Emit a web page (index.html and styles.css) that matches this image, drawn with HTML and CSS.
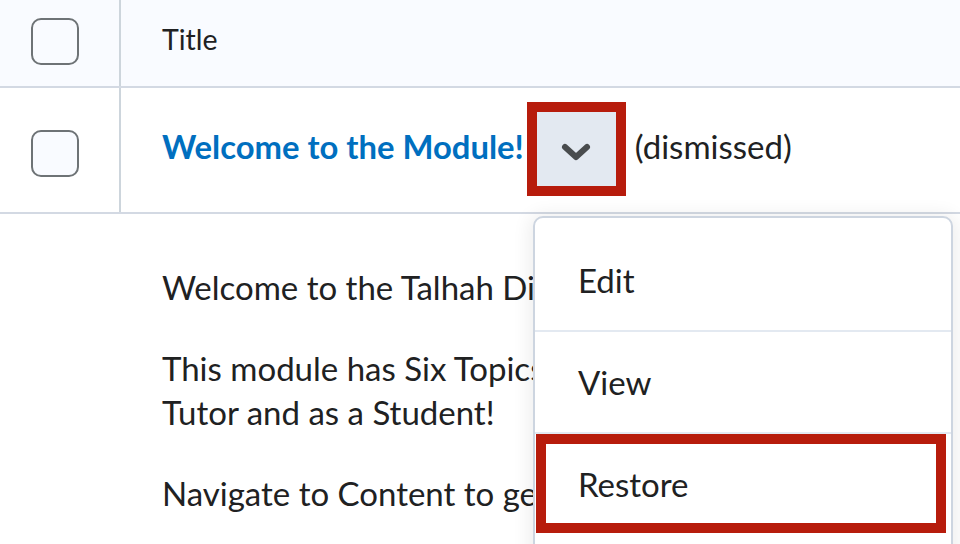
FILE: index.html
```html
<!DOCTYPE html>
<html lang="en">
<head>
<meta charset="utf-8">
<title>Module</title>
<link rel="stylesheet" href="styles.css">
</head>
<body>
<div class="page">
  <div class="table">
    <div class="row head">
      <div class="cell check"><span class="box"></span></div>
      <div class="cell main"><span class="title">Title</span></div>
    </div>
    <div class="row item">
      <div class="cell check"><span class="box"></span></div>
      <div class="cell main">
        <a class="link" href="#">Welcome to the Module!</a>
        <button class="ddbtn" type="button" aria-label="Actions">
          <svg width="40" height="30" viewBox="0 0 40 30"><polyline points="9,10 20,20 31,10" fill="none" stroke="#494c4e" stroke-width="6" stroke-linecap="round" stroke-linejoin="round"/></svg>
        </button>
        <span class="status">(dismissed)</span>
      </div>
    </div>
  </div>
  <div class="desc">
    <p>Welcome to the Talhah Digital Module!</p>
    <p>This module has Six Topics to try out as a<br>Tutor and as a Student!</p>
    <p>Navigate to Content to get started.</p>
  </div>
  <div class="menu">
    <div class="mi">Edit</div>
    <div class="mi">View</div>
    <div class="mi sel">Restore</div>
  </div>
</div>
</body>
</html>
```
FILE: styles.css
```css
html, body {
  margin: 0;
  padding: 0;
  overflow: hidden;
  background: #ffffff;
}
body {
  font-family: Lato, "Noto Sans", sans-serif;
  color: #202122;
  width: 960px;
  height: 544px;
}
.page {
  position: relative;
  width: 960px;
  height: 544px;
  overflow: hidden;
}
.row {
  display: flex;
  border-bottom: 2px solid #d3d9e3;
}
.head {
  height: 86px;
  background: #f9fbff;
}
.item {
  height: 124px;
  background: #ffffff;
}
.cell.check {
  box-sizing: border-box;
  width: 121px;
  border-right: 2px solid #cdd5dc;
  padding-left: 31px;
  display: flex;
  align-items: center;
}
.box {
  display: block;
  width: 48px;
  height: 47px;
  box-sizing: border-box;
  border: 2px solid #6e7376;
  border-radius: 10px;
  background: #f9fbff;
}
.head .box { margin-top: -4px; }
.item .box { margin-top: 7px; }
.cell.main {
  flex: 1;
  display: flex;
  align-items: center;
  padding-left: 41px;
}
.title {
  font-size: 28.5px;
  margin-top: -8px;
}
.link {
  font-size: 32.8px;
  font-weight: 700;
  color: #006fbf;
  text-decoration: none;
  margin-top: -8px;
}
.ddbtn {
  margin: -2px 0 0 3px;
  width: 99px;
  height: 94px;
  box-sizing: border-box;
  border: 10px solid #b71c0c;
  background: #e3e9f1;
  padding: 0;
  display: flex;
  align-items: center;
  justify-content: center;
  flex: none;
}
.ddbtn svg { display: block; margin-top: 6px; }
.status {
  font-size: 33px;
  margin-left: 9px;
  margin-top: -8px;
}
.desc {
  padding: 51px 0 0 162px;
  font-size: 33px;
  line-height: 44px;
  white-space: nowrap;
}
.desc p {
  margin: 0 0 37px 0;
}
.menu {
  position: absolute;
  left: 533px;
  top: 216px;
  width: 420px;
  box-sizing: border-box;
  border: 2px solid #cdd5e0;
  border-radius: 10px;
  background: #ffffff;
  padding: 12px 0 60px 0;
  box-shadow: 0 2px 18px 4px rgba(0, 0, 0, 0.07);
}
.mi {
  height: 100px;
  display: flex;
  align-items: center;
  padding-left: 43px;
  font-size: 33px;
  border-bottom: 2px solid #e3e9f1;
}
.mi.sel {
  box-sizing: border-box;
  margin: 0 5px 1px 1px;
  height: 99px;
  border: 10px solid #b71c0c;
  padding-left: 32px;
}
```
